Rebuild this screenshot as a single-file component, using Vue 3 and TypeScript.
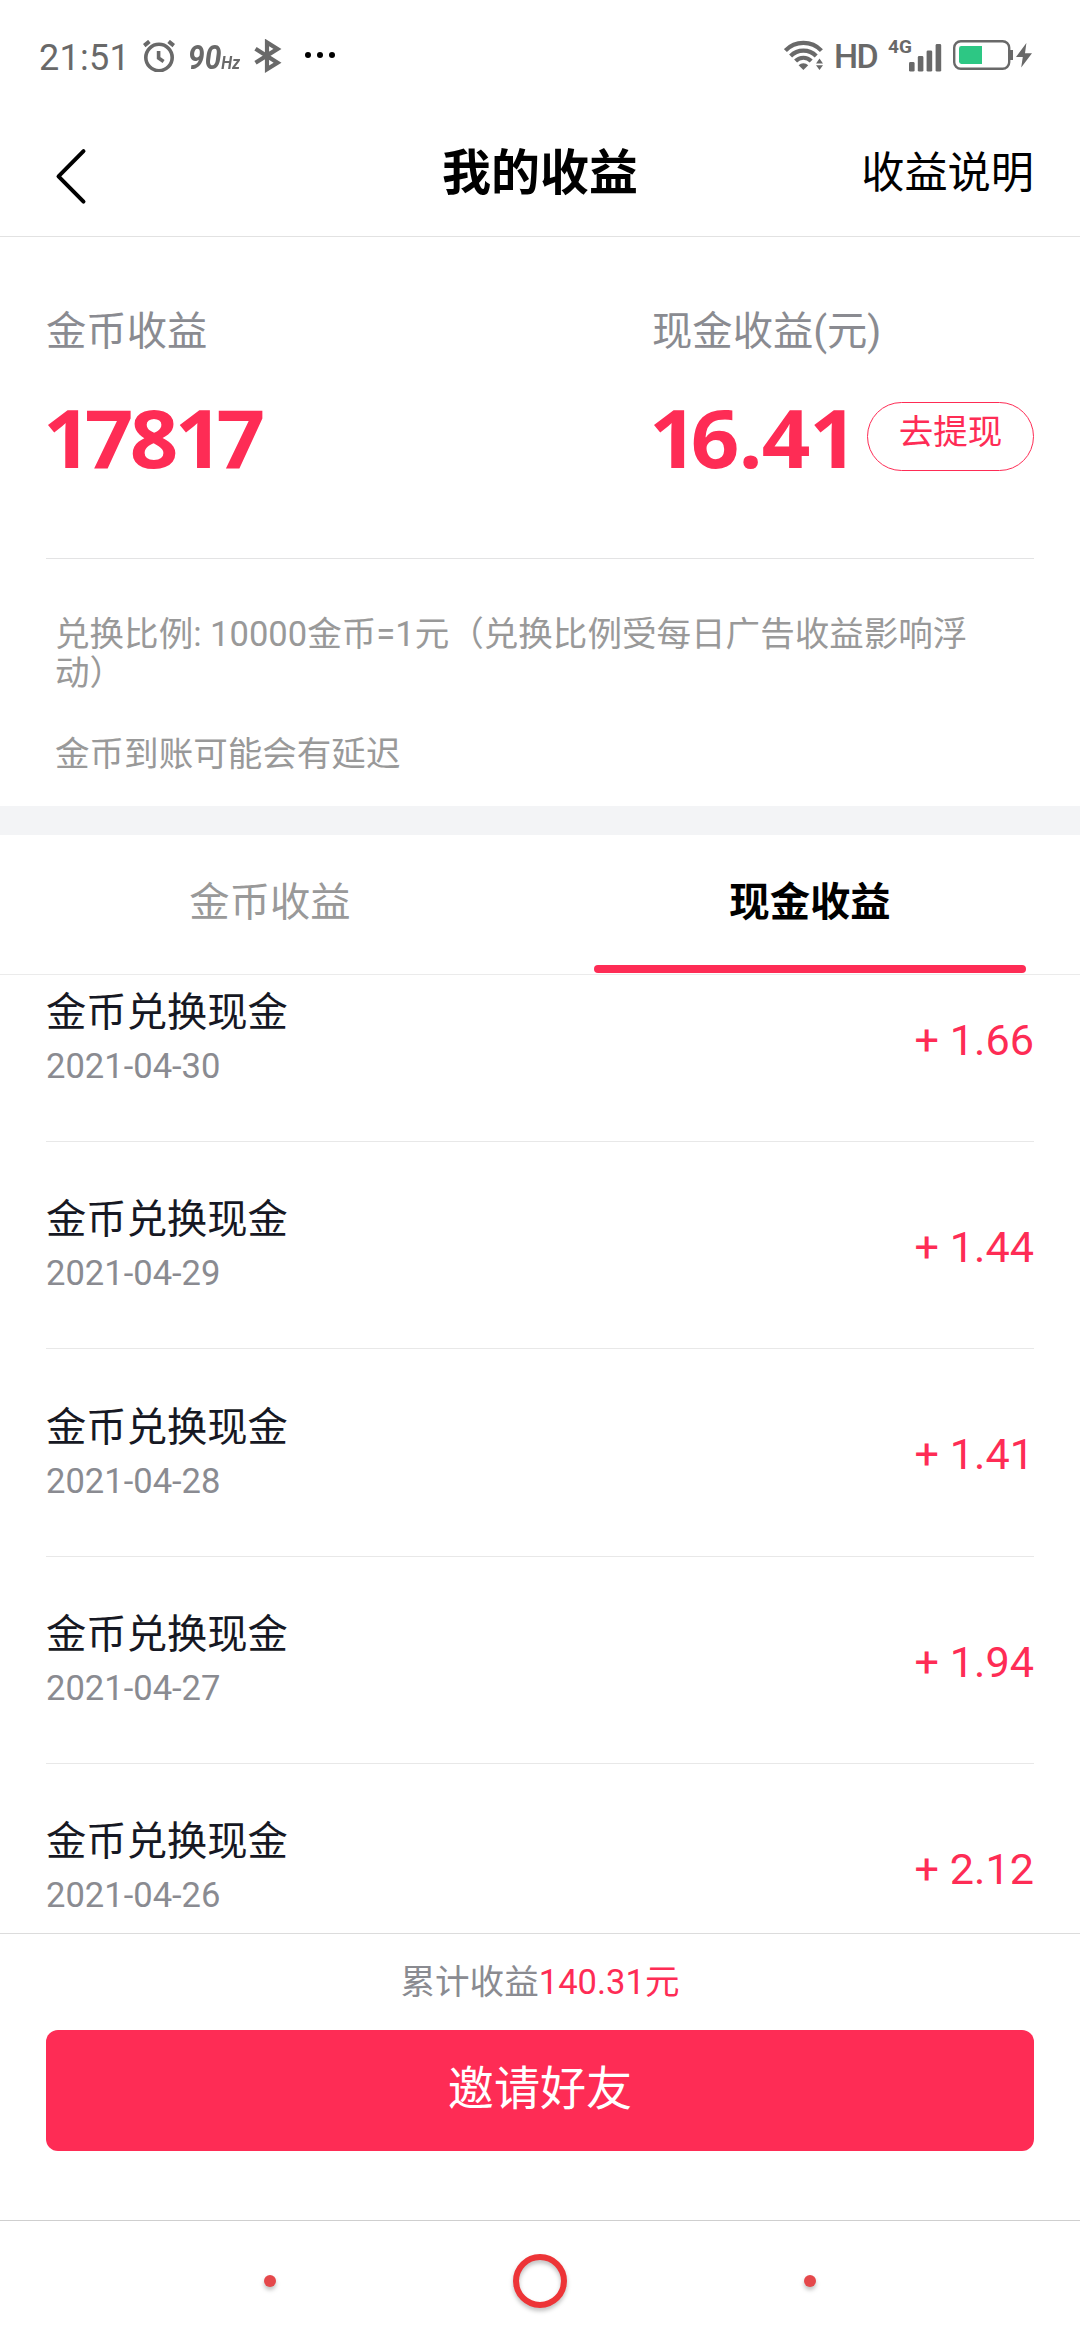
<script setup lang="ts">
import { ref } from 'vue'

interface Entry {
  title: string
  date: string
  amount: string
}

const coins = '17817'
const cash = '16.41'

const tabs: string[] = ['金币收益', '现金收益']
const active = ref<number>(1)

const entries: Entry[] = [
  { title: '金币兑换现金', date: '2021-04-30', amount: '1.66' },
  { title: '金币兑换现金', date: '2021-04-29', amount: '1.44' },
  { title: '金币兑换现金', date: '2021-04-28', amount: '1.41' },
  { title: '金币兑换现金', date: '2021-04-27', amount: '1.94' },
  { title: '金币兑换现金', date: '2021-04-26', amount: '2.12' },
]
</script>

<template>
  <div class="screen">
    <div class="status">
      <span class="time">21:51</span>
      <svg class="alarm" width="32" height="32" viewBox="0 0 32 32" fill="none" stroke="#696969">
        <circle cx="16" cy="17.5" r="13.2" stroke-width="3.6" />
        <path d="M15.600 11v7l5 3.400" stroke-width="3.600" />
        <path d="M1.200 5.600 6.400 1.400M30.800 5.600 25.600 1.400" stroke-width="4" />
      </svg>
      <span class="hz"><b>90</b><i>Hz</i></span>
      <svg class="bt" width="28" height="34" viewBox="0 0 28 34" fill="none" stroke="#696969" stroke-width="4.2">
        <path d="M1.500 9.800 23.500 23.800 13 30.200V3.400L23.500 9.900 1.500 23.800" />
      </svg>
      <span class="dots"><em></em><em></em><em></em></span>

      <svg class="wifi" width="40" height="31" viewBox="0 0 40 31" fill="none" stroke="#696969" stroke-width="4.2">
        <path d="M1.400 10.600a25 25 0 0 1 36 0" />
        <path d="M6.600 16a18 18 0 0 1 25.600 0" />
        <path d="M11.600 21a11 11 0 0 1 15.600 0" />
        <path d="M14.600 25.200a7 7 0 0 1 9.600 0L19.400 30z" fill="#696969" stroke="none" />
        <path d="M35.500 18.500 39 23.400h-7zM35.500 30 39 25.200h-7z" fill="#696969" stroke="none" />
      </svg>
      <span class="hd">HD</span>
      <span class="net">4G</span>
      <svg class="bars" width="33" height="28" viewBox="0 0 33 28" fill="#696969">
        <rect x="0" y="18" width="5.6" height="9.6" rx="1.4" />
        <rect x="8.8" y="12" width="5.6" height="15.6" rx="1.4" />
        <rect x="17.6" y="6.4" width="5.6" height="21.2" rx="1.4" />
        <rect x="26.6" y="0" width="5.6" height="27.6" rx="1.4" />
      </svg>
      <svg class="battery" width="60" height="30" viewBox="0 0 60 30">
        <rect x="1.2" y="1.2" width="55" height="27.6" rx="6.6" fill="none" stroke="#696969" stroke-width="2.4" />
        <rect x="57" y="10" width="3" height="10" fill="#696969" />
        <path d="M8.400 6H29v18H8.400A2.400 2.400 0 0 1 6 21.600V8.400A2.400 2.400 0 0 1 8.400 6z" fill="#2dc784" />
      </svg>
      <svg class="bolt" width="16" height="25" viewBox="0 0 16 25" fill="#696969">
        <path d="M10.400 0 0 14h6.800L5.200 24.600 16 10.200H9z" />
      </svg>
    </div>

    <header class="header">
      <svg class="back" width="32" height="58" viewBox="0 0 32 58" fill="none" stroke="#000" stroke-width="4" stroke-linecap="round" stroke-linejoin="round">
        <path d="M28.500 4.200 3.500 29.400 28.500 54.600" />
      </svg>
      <h1>我的收益</h1>
      <span class="explain">收益说明</span>
    </header>

    <section class="summary">
      <div class="figures">
        <div class="figure coins">
          <span class="label">金币收益</span>
          <div class="line">
            <strong><span v-for="(c, i) in coins" :key="i" :class="{ one: c === '1' }">{{ c }}</span></strong>
          </div>
        </div>
        <div class="figure">
          <span class="label">现金收益(元)</span>
          <div class="line cash">
            <strong><span v-for="(c, i) in cash" :key="i" :class="{ one: c === '1' }">{{ c }}</span></strong>
            <button class="withdraw">去提现</button>
          </div>
        </div>
      </div>
      <div class="notes">
        <p>兑换比例: 10000金币=1元（兑换比例受每日广告收益影响浮动）</p>
        <p>金币到账可能会有延迟</p>
      </div>
    </section>

    <nav class="tabs">
      <div v-for="(t, i) in tabs" :key="t" class="tab" :class="{ on: i === active }" @click="active = i">
        <span>{{ t }}</span>
      </div>
    </nav>

    <main class="list">
      <div v-for="e in entries" :key="e.date" class="row">
        <div class="info">
          <span class="name">{{ e.title }}</span>
          <span class="date">{{ e.date }}</span>
        </div>
        <span class="amount">+ {{ e.amount }}</span>
      </div>
    </main>

    <footer class="footer">
      <p class="total">累计收益<span>140.31元</span></p>
      <button class="invite">邀请好友</button>
    </footer>

    <div class="sysnav">
      <div><i class="dot"></i></div>
      <div><i class="ring"></i></div>
      <div><i class="dot"></i></div>
    </div>
  </div>
</template>

<style>
body {
  margin: 0;
  background: #fff;
}
</style>

<style scoped>
.screen {
  width: 1080px;
  height: 2340px;
  overflow: hidden;
  display: flex;
  flex-direction: column;
  background: #fff;
  color: #000;
  font-family: Roboto, 'Noto Sans CJK SC', sans-serif;
}
.screen * {
  box-sizing: border-box;
}
.screen > * {
  flex: none;
}
p,
h1 {
  margin: 0;
}
button {
  font-family: inherit;
  padding: 0;
}

.status {
  height: 112px;
  padding: 39px 0 0 39px;
  display: flex;
  align-items: flex-start;
  color: #696969;
}
.status > * {
  flex: none;
}
.time {
  width: 104px;
  padding-top: 1px;
  font-size: 36px;
  line-height: 36px;
  letter-spacing: 0.3px;
}
.alarm {
  margin-top: 1px;
}
.hz {
  width: 54px;
  margin-left: 13px;
  display: flex;
  align-items: baseline;
  font-style: italic;
  line-height: 36px;
  transform: scaleX(0.88);
  transform-origin: 0 0;
}
.hz b {
  font-size: 34px;
  font-weight: 700;
}
.hz i {
  font-size: 18px;
  font-weight: 700;
}
.bt {
  margin-left: 12px;
}
.dots {
  width: 30px;
  margin-left: 23px;
  margin-top: 13px;
  display: flex;
  justify-content: space-between;
}
.dots em {
  width: 6.400px;
  height: 6.400px;
  border-radius: 50%;
  background: #000;
}
.wifi {
  margin-left: auto;
  margin-top: 1px;
}
.hd {
  width: 54px;
  margin-left: 10px;
  font-size: 34px;
  line-height: 34px;
  font-weight: 500;
  letter-spacing: -1.500px;
}
.net {
  width: 23px;
  font-size: 19px;
  line-height: 19px;
  font-weight: 700;
  margin-top: -2px;
}
.bars {
  margin-left: -2px;
  margin-top: 5px;
}
.battery {
  margin-left: 11px;
  margin-top: 1px;
}
.bolt {
  margin: 4px 48px 0 3px;
}

.header {
  height: 125px;
  padding: 0 46px;
  display: grid;
  grid-template-columns: 1fr auto 1fr;
  align-items: center;
  border-bottom: 1px solid #e2e2e2;
}
.back {
  margin: 4px 0 0 9px;
}
h1 {
  font-size: 48.960px;
  line-height: 60px;
  font-weight: 700;
}
.explain {
  justify-self: end;
  font-size: 43.200px;
  line-height: 60px;
}

.summary {
  height: 569px;
  padding: 67px 46px 0;
}
.figures {
  height: 255px;
  display: flex;
  border-bottom: 1px solid #e3e3e4;
}
.coins {
  width: 606px;
}
.label {
  display: block;
  font-size: 40.320px;
  line-height: 56px;
  color: #8a8b91;
}
.line {
  margin-top: 37px;
  height: 80px;
  display: flex;
}
.line strong {
  margin-left: -3px;
  font-family: 'Open Sans', sans-serif;
  font-size: 81px;
  line-height: 80px;
  font-weight: 700;
  letter-spacing: -3.500px;
  color: #fe2c55;
  transform: scaleX(1.05);
  transform-origin: 0 0;
}
.line .one {
  letter-spacing: -6.500px;
}
.cash {
  width: 382px;
  justify-content: space-between;
  align-items: flex-start;
}
.cash strong {
  letter-spacing: -1px;
}
.withdraw {
  width: 167px;
  height: 69px;
  margin-top: 5px;
  padding-bottom: 8px;
  border: 1px solid #fe2c55;
  border-radius: 35px;
  background: #fff;
  color: #fe2c55;
  font-size: 34.560px;
  line-height: 59px;
}
.notes {
  padding: 56px 23px 0 9px;
  font-size: 34.560px;
  line-height: 39px;
  color: #999;
}
.notes p + p {
  margin-top: 42px;
}

.tabs {
  height: 169px;
  border-top: 29px solid #f3f4f6;
  border-bottom: 1px solid #ebebeb;
  display: flex;
}
.tab {
  flex: 1;
  padding: 40px 54px 0;
  text-align: center;
  font-size: 40.320px;
  line-height: 56px;
  color: #999;
}
.tab.on {
  color: #000;
  font-weight: 700;
}
.tab.on::after {
  content: '';
  display: block;
  height: 8px;
  margin-top: 34px;
  border-radius: 4px;
  background: #fe2c55;
}

.list {
  height: 958px;
  padding: 0 46px;
  overflow: hidden;
}
.row {
  height: 207.360px;
  display: flex;
  align-items: center;
  justify-content: space-between;
  border-bottom: 1px solid #e8e8e8;
}
.row:first-child {
  margin-top: -40.400px;
}
.info {
  display: flex;
  flex-direction: column;
}
.name {
  font-size: 40.320px;
  line-height: 56px;
  color: #161823;
}
.date {
  font-size: 34.560px;
  line-height: 50px;
  color: #8a8b91;
}
.amount {
  padding-top: 5.600px;
  font-size: 43.200px;
  line-height: 50px;
  color: #fe2c55;
}

.footer {
  height: 287px;
  padding: 24px 46px 0;
  border-top: 1px solid #dcdcdc;
}
.total {
  font-size: 34.560px;
  line-height: 48px;
  text-align: center;
  color: #8a8b91;
}
.total span {
  color: #fe2c55;
}
.invite {
  display: block;
  width: 988px;
  height: 121px;
  margin-top: 24px;
  padding-bottom: 4px;
  border: 0;
  border-radius: 12px;
  background: #fe2c55;
  color: #fff;
  font-size: 46.080px;
  line-height: 60px;
}

.sysnav {
  height: 120px;
  padding: 0 135px;
  border-top: 1px solid #cfcfcf;
  display: flex;
}
.sysnav div {
  flex: 1;
  display: flex;
  align-items: center;
  justify-content: center;
}
.ring {
  width: 54px;
  height: 54px;
  border: 6px solid #ed3437;
  border-radius: 50%;
  filter: drop-shadow(0 3px 2px rgba(0, 0, 0, 0.25));
}
.dot {
  width: 12px;
  height: 12px;
  border-radius: 50%;
  background: #e5484b;
  filter: drop-shadow(0 3px 2px rgba(0, 0, 0, 0.25));
}
</style>
